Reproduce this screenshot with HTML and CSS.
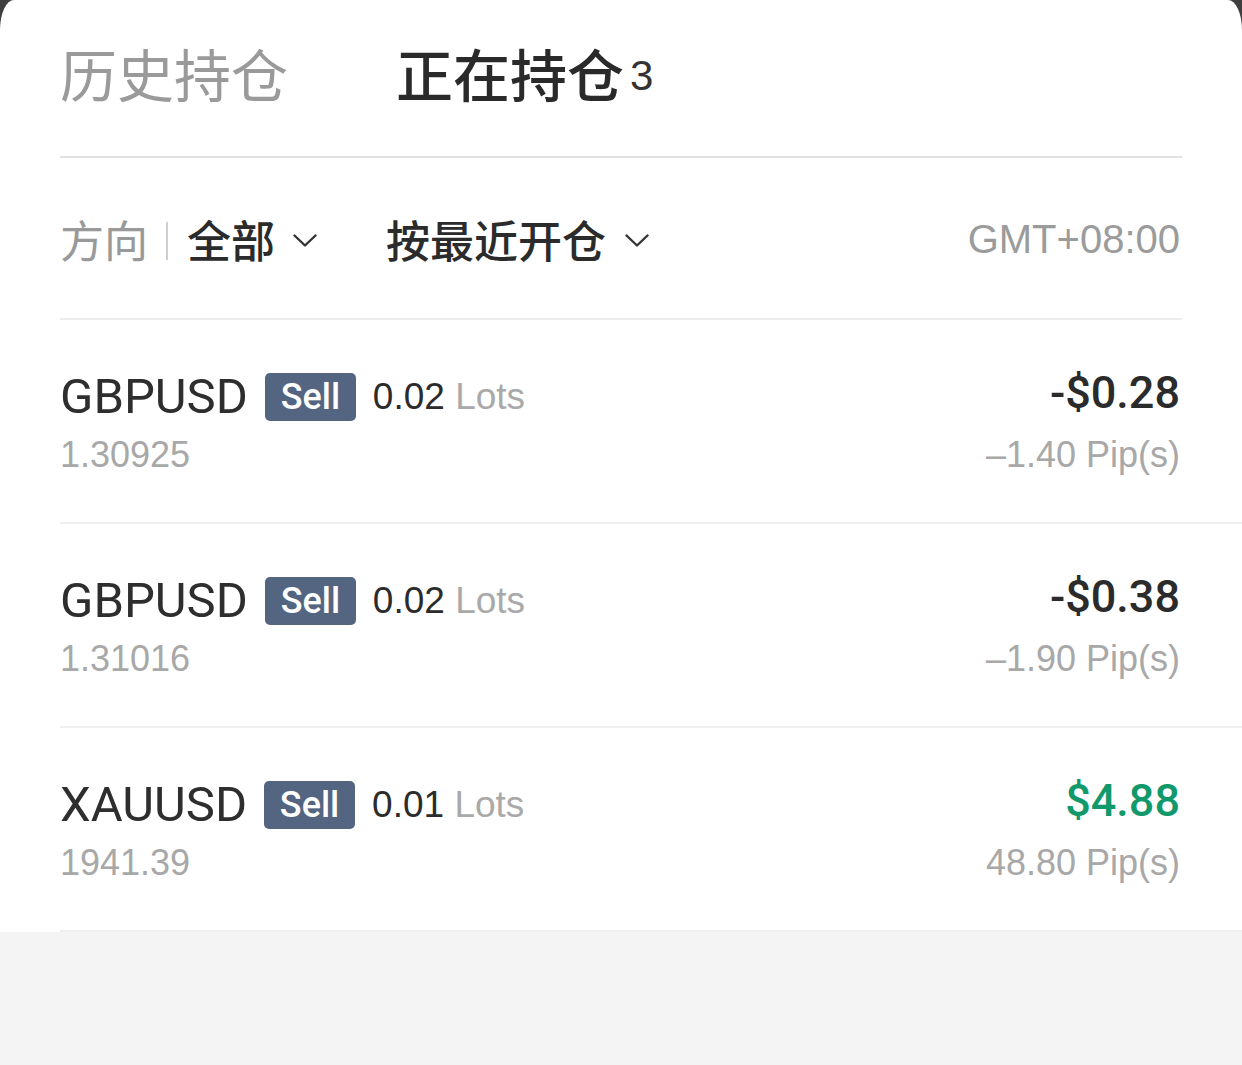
FILE: index.html
```html
<!DOCTYPE html>
<html lang="zh-CN">
<head>
<meta charset="utf-8">
<title>持仓</title>
<link rel="stylesheet" href="styles.css">
</head>
<body>
<div class="frame">
  <div class="sheet">
    <div class="tabs">
      <div class="tab">历史持仓</div>
      <div class="tab active">正在持仓<span class="count">3</span></div>
    </div>
    <div class="filters">
      <div class="filter-left">
        <span class="label">方向</span>
        <span class="sep"></span>
        <span class="value">全部</span>
        <svg class="chev" viewBox="0 0 24 13" width="24" height="13"><polyline points="1.5,1.5 12,11.5 22.5,1.5"/></svg>
        <span class="value sort">按最近开仓</span>
        <svg class="chev chev-sort" viewBox="0 0 24 13" width="24" height="13"><polyline points="1.5,1.5 12,11.5 22.5,1.5"/></svg>
      </div>
      <div class="tz">GMT+08:00</div>
    </div>
    <ul class="positions">
      <li class="pos">
        <div class="pos-left">
          <div class="line1"><span class="sym">GBPUSD</span><span class="badge">Sell</span><span class="lots"><span class="num">0.02</span> <span class="unit">Lots</span></span></div>
          <div class="price">1.30925</div>
        </div>
        <div class="pos-right">
          <div class="pl">-$0.28</div>
          <div class="pips">–1.40 Pip(s)</div>
        </div>
      </li>
      <li class="pos">
        <div class="pos-left">
          <div class="line1"><span class="sym">GBPUSD</span><span class="badge">Sell</span><span class="lots"><span class="num">0.02</span> <span class="unit">Lots</span></span></div>
          <div class="price">1.31016</div>
        </div>
        <div class="pos-right">
          <div class="pl">-$0.38</div>
          <div class="pips">–1.90 Pip(s)</div>
        </div>
      </li>
      <li class="pos">
        <div class="pos-left">
          <div class="line1"><span class="sym">XAUUSD</span><span class="badge">Sell</span><span class="lots"><span class="num">0.01</span> <span class="unit">Lots</span></span></div>
          <div class="price">1941.39</div>
        </div>
        <div class="pos-right">
          <div class="pl gain">$4.88</div>
          <div class="pips">48.80 Pip(s)</div>
        </div>
      </li>
    </ul>
  </div>
</div>
</body>
</html>
```

FILE: styles.css
```css
html, body {
  margin: 0;
  padding: 0;
  background: #f4f4f4;
}

body {
  width: 1242px;
  height: 1065px;
  overflow: hidden;
  font-family: "Liberation Sans", "Noto Sans CJK SC", sans-serif;
  color: #2b2b2b;
}

.frame {
  background: #3e3e3e;
}

.sheet {
  background: #ffffff;
  border-top-left-radius: 14px 30px;
  border-top-right-radius: 14px 30px;
}

/* Tabs */
.tabs {
  height: 158px;
  box-sizing: border-box;
  padding: 0 0 12px 0;
  margin: 0 60px;
  display: flex;
  align-items: center;
  gap: 108px;
  border-bottom: 2px solid #e2e2e2;
}

.tab {
  display: flex;
  align-items: center;
  font-family: "Noto Sans CJK SC", sans-serif;
  font-size: 57px;
  line-height: 70px;
  color: #9a9a9a;
  font-weight: 400;
}

.tab.active {
  color: #2a2a2a;
  font-weight: 500;
}

.count {
  font-family: "Liberation Sans", sans-serif;
  font-size: 42px;
  font-weight: 400;
  color: #333;
  margin-left: 6px;
  margin-top: 8px;
}

/* Filters */
.filters {
  height: 162px;
  box-sizing: border-box;
  padding-top: 2px;
  margin: 0 60px;
  display: flex;
  align-items: center;
  justify-content: space-between;
  border-bottom: 2px solid #ececec;
}

.filter-left {
  display: flex;
  align-items: center;
}

.label {
  font-family: "Noto Sans CJK SC", sans-serif;
  font-size: 44px;
  line-height: 56px;
  color: #999;
}

.sep {
  width: 2px;
  height: 38px;
  background: #cfcfcf;
  margin: 4px 19px 0 18px;
}

.value {
  font-family: "Noto Sans CJK SC", sans-serif;
  font-size: 44px;
  line-height: 56px;
  font-weight: 500;
  color: #2b2b2b;
}

.sort {
  margin-left: 69px;
}

.chev {
  margin-left: 18px;
  margin-top: 2px;
  fill: none;
  stroke: #333;
  stroke-width: 2.4;
  stroke-linecap: round;
  stroke-linejoin: round;
}

.chev-sort {
  margin-left: 19px;
}

.tz {
  font-size: 40px;
  line-height: 48px;
  color: #9b9b9b;
  margin-right: 2px;
}

/* Positions */
.positions {
  list-style: none;
  margin: 0;
  padding: 0;
}

.pos {
  height: 204px;
  box-sizing: border-box;
  margin-left: 60px;
  padding: 52px 62px 0 0;
  display: flex;
  justify-content: space-between;
  align-items: flex-start;
  border-bottom: 2px solid #efefef;
}

.line1 {
  height: 50px;
  display: flex;
  align-items: center;
}

.sym {
  font-family: "Roboto", sans-serif;
  font-size: 49px;
  line-height: 50px;
  color: #2e2e2e;
  margin-right: 17px;
}

.badge {
  width: 91px;
  height: 48px;
  border-radius: 5px;
  background: #546581;
  color: #ffffff;
  display: flex;
  align-items: center;
  justify-content: center;
  font-family: "Roboto", sans-serif;
  font-weight: 500;
  font-size: 36px;
  margin-right: 17px;
}

.lots {
  font-size: 37px;
  line-height: 50px;
}

.num {
  color: #2b2b2b;
}

.unit {
  color: #a9a9a9;
}

.price {
  margin-top: 13px;
  font-size: 36px;
  line-height: 40px;
  color: #a8a8a8;
}

.pos-right {
  text-align: right;
  margin-top: -4px;
}

.pl {
  font-family: "Roboto", sans-serif;
  font-weight: 500;
  font-size: 45px;
  line-height: 50px;
  color: #2b2b2b;
}

.pl.gain {
  color: #12996b;
}

.pips {
  margin-top: 17px;
  font-size: 36px;
  line-height: 40px;
  color: #a8a8a8;
}
```
